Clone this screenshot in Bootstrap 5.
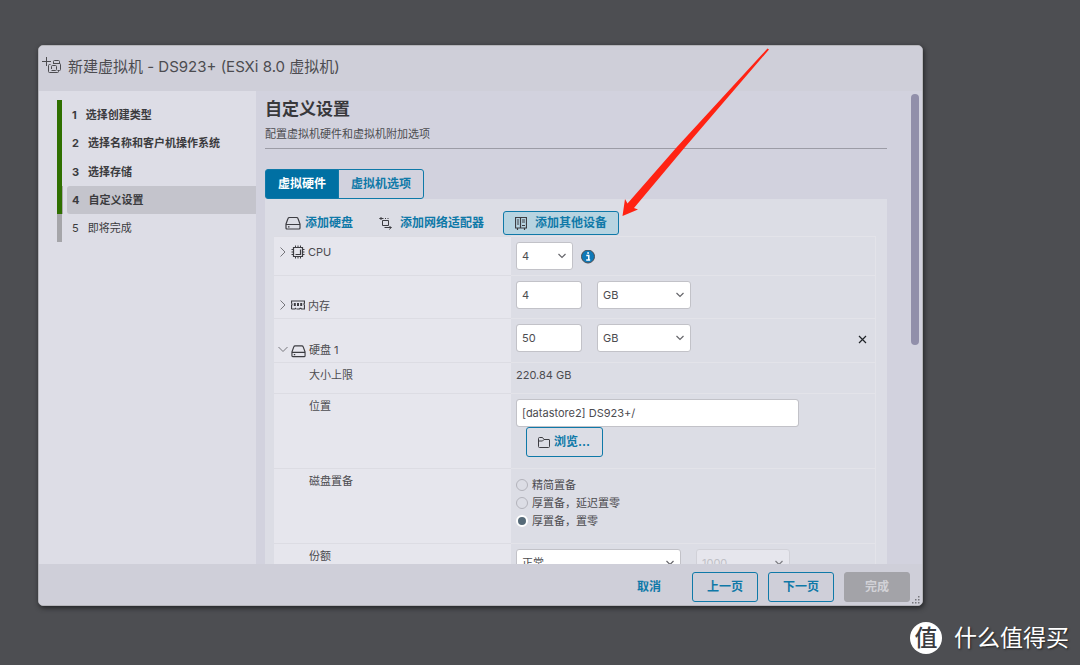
<!DOCTYPE html>
<html lang="zh-CN">
<head>
<meta charset="utf-8">
<meta name="viewport" content="width=device-width, initial-scale=1">
<title>新建虚拟机</title>
<link href="https://cdn.jsdelivr.net/npm/bootstrap@5.3.0/dist/css/bootstrap.min.css" rel="stylesheet">
<style>
:root { --ink:#4c4c50; --accent:#0f79a8; }
body { background:#4d4e52; color:var(--ink); font-family:Inter,"Noto Sans CJK SC",sans-serif; font-size:11px; line-height:16px; height:100vh; overflow:hidden; padding:45px 157px 59px 38px; }
svg { fill:none; stroke:currentColor; flex:none; }
.wizard { background:#d2d2de; border:1px solid #b5b5ba; border-radius:5px; box-shadow:1px 2px 5px #222326; overflow:hidden; }
.wizard-head { height:47px; background:#cfcfd9; padding:4px 4px 7px 3px; font-size:15px; }
.steps { width:217px; background:#dddde6; padding:9px 0 0 18px; }
.steps li { height:28px; border-left:5px solid #2f6f00; padding-left:5px; font-weight:700; color:#3b3b3e; }
.steps a { color:inherit; padding-left:5px; gap:9px; }
.steps li.now { box-shadow:inset 1px 0 #aaa; }
.steps li.now a { background:#c4c4cc; border-radius:3px 0 0 3px; }
.steps li.todo { border-color:#a5a5a9; font-weight:400; }
.steps li:first-child, .steps li:nth-child(3) { height:29px; }
.pane { padding:6px 35px 0 9px; }
.pane h1 { font-size:17px; line-height:24px; font-weight:700; color:#38383b; }
.pane-sub { border-bottom:1px solid #9c9ca6; padding:5px 0 6px; margin-bottom:20px; }
.btn { --bs-btn-font-size:12px; --bs-btn-line-height:16px; --bs-btn-border-radius:3px; --bs-btn-font-weight:700; --bs-btn-color:var(--accent); --bs-btn-border-color:var(--accent); --bs-btn-padding-y:0px; --bs-btn-padding-x:11px; height:30px; }
.tabs .btn { --bs-btn-padding-x:12px; }
.btn.tab-on { background:#0070a3; color:#fff; }
.panel { background:#dcdde5; padding:12px 11px 0 9px; }
.tools { height:24px; margin-bottom:1px; }
.tools .btn { height:24px; }
.tools svg, .item-name svg, .browse svg { color:#3d3d42; }
.btn.tool-on { background:#b7d4e1; border-color:var(--accent); }
.setting { border-top:1px solid #e3e3e9; }
.item-name { width:237px; background:#e6e6ed; border-top:1px solid #dcdce3; margin-top:-1px; padding:0 0 0 35px; }
.item-name.tree { padding-left:4px; gap:3px; }
.item-value { padding:5px 0 0 5px; gap:15px; border-right:1px solid #e3e3e9; }
.item-value.choices { gap:2px; }
.form-control, .form-select { height:28px; min-height:0; font-size:11px; line-height:16px; padding:0 5px; border:1px solid #c2c2c8; border-radius:3px; background-color:#fff; color:var(--ink); }
.form-select { background-image:url("data:image/svg+xml,%3Csvg xmlns='http://www.w3.org/2000/svg' viewBox='0 0 10 10'%3E%3Cpath fill='none' stroke='%2366666b' stroke-width='1.2' d='M1.500 3L5 6.500 8.500 3'/%3E%3C/svg%3E"); background-size:10px 10px; background-position:right 5px center; }
.form-select:disabled { background-color:#e9e9ef; color:#b9b9c0; border-color:#cfcfd6; opacity:.8; }
.w-s { width:57px; } .w-m { width:66px; } .w-l { width:94px; } .w-xl { width:165px; } .w-path { width:283px; max-width:100%; }
.h-a { height:39px; } .h-b { height:43px; } .h-b2 { height:44px; } .h-c { height:31px; } .h-d { height:75px; }
.form-check-input { width:12px; height:12px; margin:0; float:none; border:1px solid #b3b3bb; background-color:transparent; }
.form-check-input:checked { border:2px solid #fff; background:#566a78; }
.browse { margin-left:10px; width:77px; }
.wizard-foot { height:41px; background:#cfcfd9; padding:4px 12px 0 0; gap:10px; }
.wizard-foot .btn { width:66px; padding:0; }
.wizard-foot .btn:disabled { background:#a3a3a8; border-color:#a3a3a8; color:#d2d2d7; opacity:1; }
.thumb { width:8px; height:251px; right:3px; top:3px; border-radius:4px; background:#918faa; }
.grip { right:2px; bottom:1px; fill:#77777c; stroke:none; }
.arrow { left:616px; top:44px; }
.brand { right:11px; bottom:11px; color:#fff; font-size:23px; line-height:32px; gap:12px; text-shadow:1px 1px 2px #222; }
.brand-disc { width:32px; height:32px; border-radius:50%; background:#fff; color:#3b3c40; font-size:23px; font-weight:500; text-shadow:none; }
</style>
</head>
<body>
<main class="wizard d-flex flex-column h-100 position-relative">
  <header class="wizard-head d-flex align-items-center gap-1">
    <svg width="22" height="22" viewBox="0 0 22 22"><path d="M4.500 1v9M0 5.500h9M11.500 8V5.500q0-1 1-1h4q1 0 1 1V8M8.500 8.500h-1q-1 0-1 1v6q0 1 1 1h8q1 0 1-1v-1M11.500 7.500h6q1 0 1 1v5q0 1-1 1h-2M9.500 13v-2.500q0-1 1-1h3q1 0 1 1v3q0 1-1 1h-4"/></svg>
    <span>新建虚拟机 - DS923+ (ESXi 8.0 虚拟机)</span>
  </header>
  <div class="d-flex flex-fill overflow-hidden position-relative">
    <nav class="steps flex-shrink-0">
      <ol class="list-unstyled m-0">
        <li><a class="d-flex align-items-center h-100 text-decoration-none" href="#"><span>1</span>选择创建类型</a></li>
        <li><a class="d-flex align-items-center h-100 text-decoration-none" href="#"><span>2</span>选择名称和客户机操作系统</a></li>
        <li><a class="d-flex align-items-center h-100 text-decoration-none" href="#"><span>3</span>选择存储</a></li>
        <li class="now"><a class="d-flex align-items-center h-100 text-decoration-none" href="#"><span>4</span>自定义设置</a></li>
        <li class="todo"><a class="d-flex align-items-center h-100 text-decoration-none" href="#"><span>5</span>即将完成</a></li>
      </ol>
    </nav>
    <section class="pane flex-fill">
      <h1 class="m-0">自定义设置</h1>
      <div class="pane-sub">配置虚拟机硬件和虚拟机附加选项</div>
      <div class="btn-group tabs">
        <button type="button" class="btn tab-on">虚拟硬件</button>
        <button type="button" class="btn">虚拟机选项</button>
      </div>
      <div class="panel">
        <div class="tools d-flex">
          <button type="button" class="btn border-0 d-flex align-items-center gap-1"><svg width="16" height="14" viewBox="0 0 16 14"><path d="M1 8l2-5.500q.3-1 1.500-1h7q1.200 0 1.500 1L15 8v4q0 1-1 1H2q-1 0-1-1zM1 8.500h14M3 10.800h1.500" stroke-width="1.200"/></svg>添加硬盘</button>
          <button type="button" class="btn border-0 d-flex align-items-center gap-2 ms-1"><svg width="13" height="14" viewBox="0 0 13 14"><path d="M3.500 4.500h6v5h-6zM.5 2.500h4M6 2.500h1M8.500 2.500h1M2.500 1L1 2.500 2.500 4M5.500 11.500h7M10.500 10l1.500 1.500-1.500 2"/></svg>添加网络适配器</button>
          <button type="button" class="btn tool-on d-flex align-items-center gap-2 ms-2"><svg width="12" height="13" viewBox="0 0 12 13"><path d="M.5.5h11v10.500H.5zM5.500 1v10M2.500 11v2M9.500 11v2" stroke-width="1.200"/><path d="M2 3h2M2 5h2M2 7h2M7 3h3M7 5h3M7 8.500h3"/></svg>添加其他设备</button>
        </div>
        <div class="setting d-flex h-a">
          <label for="cpu" class="item-name tree d-flex align-items-center pb-2"><svg width="10" height="12" viewBox="0 0 10 12"><path d="M2.500 1.500L7 6l-4.500 4.500" stroke="#77777c"/></svg><svg width="14" height="14" viewBox="0 0 14 14"><path d="M2.500 2.500h9v9h-9zM4.500 9.500h5v-5" stroke-width="1.200"/><path d="M4.500.5v2M7 .5v2M9.500.5v2M4.500 11.500v2M7 11.500v2M9.500 11.500v2M.5 4.500h2M.5 7h2M.5 9.500h2M11.500 4.500h2M11.500 7h2M11.500 9.500h2"/></svg>CPU</label>
          <div class="item-value flex-fill d-flex align-items-start gap-2">
            <select id="cpu" class="form-select w-s"><option>4</option></select>
            <svg class="mt-2" width="14" height="14" viewBox="0 0 14 14" stroke="none"><circle cx="7" cy="6.500" r="6.500" fill="#0f79b8"/><path d="M5.300 5.500h2.500v4M5.200 10h4M6.200 3h1.800" stroke="#fff" stroke-width="1.500"/></svg>
          </div>
        </div>
        <div class="setting d-flex h-b">
          <label for="mem" class="item-name tree d-flex align-items-end pb-1"><svg class="mb-1" width="10" height="10" viewBox="0 1 10 10"><path d="M2.500 1.500L7 6l-4.500 4.500" stroke="#77777c"/></svg><svg class="mb-1" width="14" height="10" viewBox="0 0 14 10"><path d="M.5 3V1h13v2q-1 1 0 2.500V9h-3L9.500 8M.5 9V5.500q1-1 0-2.500M.5 9H4l1-1M5.500 9h3l1-1" stroke-width="1.200"/><path d="M3.800 3v3M7 3v3M10.200 3v3" stroke-width="2"/></svg><span>内存</span></label>
          <div class="item-value flex-fill d-flex align-items-start">
            <input id="mem" class="form-control w-m" value="4">
            <select class="form-select w-l" aria-label="内存单位"><option>GB</option></select>
          </div>
        </div>
        <div class="setting d-flex h-b2">
          <label for="disk" class="item-name tree d-flex align-items-end pb-1"><svg width="10" height="16" viewBox="0 0 10 16"><path d="M.5 5L5 9.500 9.500 5" stroke="#77777c"/></svg><svg width="15" height="14" viewBox="0 0 16 14"><path d="M1 8l2-5.500q.3-1 1.500-1h7q1.200 0 1.500 1L15 8v4q0 1-1 1H2q-1 0-1-1zM1 8.500h14M3 10.800h1.500" stroke-width="1.200"/></svg><span>硬盘 1</span></label>
          <div class="item-value flex-fill d-flex align-items-start">
            <input id="disk" class="form-control w-m" value="50">
            <select class="form-select w-l" aria-label="硬盘单位"><option>GB</option></select>
            <button type="button" class="btn border-0 ms-auto px-2 d-flex align-items-center text-dark" aria-label="移除"><svg width="9" height="9" viewBox="0 0 9 9"><path d="M1 1l7 7M8 1L1 8" stroke-width="1.200"/></svg></button>
          </div>
        </div>
        <div class="setting d-flex h-c">
          <div class="item-name pt-1">大小上限</div>
          <div class="item-value flex-fill pt-1">220.84 GB</div>
        </div>
        <div class="setting d-flex h-d">
          <label for="path" class="item-name pt-1">位置</label>
          <div class="item-value flex-fill">
            <input id="path" class="form-control w-path" value="[datastore2] DS923+/">
            <button type="button" class="btn browse d-flex align-items-center gap-1"><svg width="12" height="11" viewBox="0 0 12 11"><path d="M.5 9.500v-8q0-1 1-1h3L6 2.500h5q.500 0 .500.500v6.500q0 1-1 1h-9q-1 0-1-1zM.5 4h4L6 2.500"/></svg>浏览...</button>
          </div>
        </div>
        <div class="setting d-flex h-d">
          <div class="item-name pt-1">磁盘置备</div>
          <div class="item-value choices flex-fill d-flex flex-column pt-2">
            <div class="d-flex align-items-center gap-1"><input type="radio" class="form-check-input" name="prov" id="p1"><label for="p1">精简置备</label></div>
            <div class="d-flex align-items-center gap-1"><input type="radio" class="form-check-input" name="prov" id="p2"><label for="p2">厚置备，延迟置零</label></div>
            <div class="d-flex align-items-center gap-1"><input type="radio" class="form-check-input" name="prov" id="p3" checked><label for="p3">厚置备，置零</label></div>
          </div>
        </div>
        <div class="setting d-flex h-b">
          <label for="share" class="item-name pt-1">份额</label>
          <div class="item-value flex-fill d-flex align-items-start">
            <select id="share" class="form-select w-xl"><option>正常</option></select>
            <select class="form-select w-l" aria-label="份额值" disabled><option>1000</option></select>
          </div>
        </div>
      </div>
    </section>
    <div class="thumb position-absolute"></div>
  </div>
  <footer class="wizard-foot d-flex align-items-center justify-content-end flex-shrink-0">
    <button type="button" class="btn border-0">取消</button>
    <button type="button" class="btn">上一页</button>
    <button type="button" class="btn">下一页</button>
    <button type="button" class="btn" disabled>完成</button>
  </footer>
  <svg class="grip position-absolute" width="8" height="8" viewBox="0 0 8 8"><path d="M6 0h1.500v1.500H6zM6 3h1.500v1.500H6zM6 6h1.500v1.500H6zM3 3h1.500v1.500H3zM3 6h1.500v1.500H3zM0 6h1.500v1.500H0z"/></svg>
</main>
<svg class="arrow position-absolute" width="156" height="176" viewBox="616 44 156 176"><path d="M767.500 48.500l1.500 1L686 146 634 208l4 1.500-15.500 6.500 2.500-17 2.500 4.500L676 148z" fill="#ff2313" stroke="none"/></svg>
<div class="brand position-absolute d-flex align-items-center"><span class="brand-disc d-flex align-items-center justify-content-center">值</span>什么值得买</div>
<script src="https://cdn.jsdelivr.net/npm/bootstrap@5.3.0/dist/js/bootstrap.bundle.min.js"></script>
</body>
</html>
